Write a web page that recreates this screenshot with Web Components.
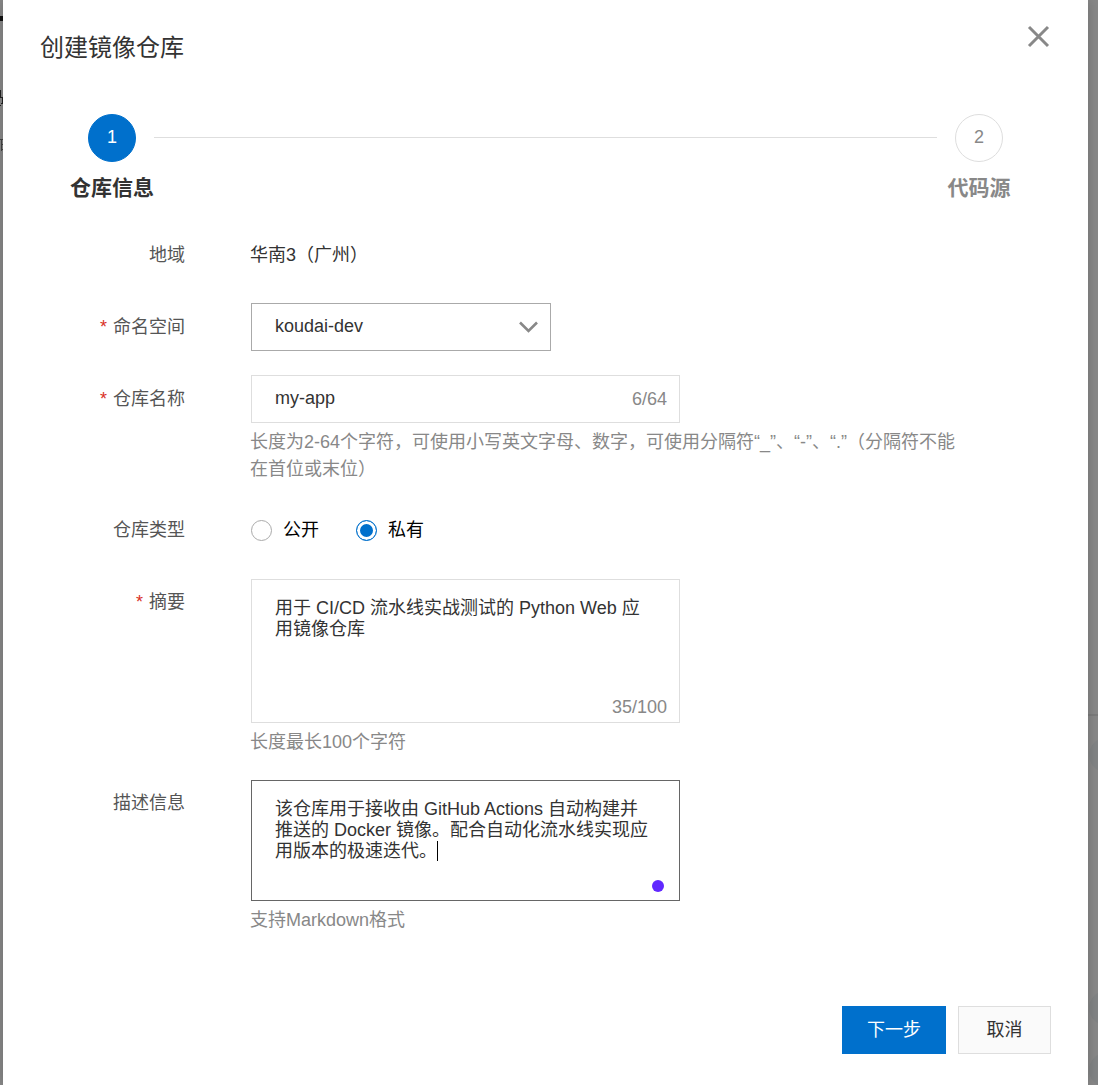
<!DOCTYPE html>
<html lang="zh-CN">
<head>
<meta charset="utf-8">
<meta name="viewport" content="width=device-width, initial-scale=1">
<title>创建镜像仓库</title>
<style>
  body{margin:0;background:#888;color:#333;font:18px/27px "Liberation Sans","Noto Sans CJK SC",sans-serif;text-spacing-trim:space-all}
</style>
</head>
<body>
<repo-dialog heading="创建镜像仓库">
  <step-bar slot="steps">
    <step-item num="1" active>仓库信息</step-item>
    <step-item num="2">代码源</step-item>
  </step-bar>
  <static-field label="地域">华南3（广州）</static-field>
  <select-field label="命名空间" required value="koudai-dev"></select-field>
  <text-field label="仓库名称" required value="my-app" count="6/64">长度为2-64个字符，可使用小写英文字母、数字，可使用分隔符“_”、“-”、“.”（分隔符不能在首位或末位）</text-field>
  <radio-field label="仓库类型" options="公开,私有" value="私有"></radio-field>
  <area-field label="摘要" required count="35/100" value="用于 CI/CD 流水线实战测试的 Python Web 应用镜像仓库">长度最长100个字符</area-field>
  <area-field label="描述信息" active value="该仓库用于接收由 GitHub Actions 自动构建并推送的 Docker 镜像。配合自动化流水线实现应用版本的极速迭代。">支持Markdown格式</area-field>
  <ui-button slot="actions" primary>下一步</ui-button>
  <ui-button slot="actions">取消</ui-button>
</repo-dialog>

<script>
(function () {
  class RepoDialog extends HTMLElement {
    connectedCallback() {
      const s = this.attachShadow({ mode: 'open' });
      s.innerHTML = `
        <style>
          *{box-sizing:border-box}
          :host{display:block;position:relative;padding:0 10px 0 3px;overflow:hidden}
          .under{position:absolute;inset:0;width:100%;height:100%}
          .panel{position:relative;display:flex;flex-direction:column;min-height:100vh;padding:24px 37px 31px;background:#fff;box-shadow:0 0 12px rgba(0,0,0,.2)}
          header{display:flex;justify-content:space-between;align-items:flex-start}
          h1{margin:0;font-size:24px;font-weight:400;line-height:48px}
          .close{display:block;width:24px;height:24px;padding:0;border:0;background:none;cursor:pointer}
          .close svg{display:block}
          .steps{margin:42px 30px 29px}
          form{display:grid;gap:24px}
          footer{display:flex;justify-content:flex-end;gap:12px;margin-top:auto;padding-top:48px}
        </style>
        <svg class="under" aria-hidden="true">
          <path d="M0 16h3v5H0z" fill="#111"/>
          <path d="M0 90h1v7H0zM0 97h3v1H0zM2 98h1v5H2zM1 103h2v1H1zM0 105h1v1H0z" fill="#222"/>
          <path d="M0 139h3v1H0zM1 140h1v11H1zM2 144h1v1H2zM2 149h1v1H2z" fill="#444"/>
          <svg x="100%" overflow="visible"><path d="M-10 714h10v2h-10z" fill="#7c7c7c"/><g fill="#828485"><circle cx="8" cy="755" r="17"/><circle cx="8" cy="1008" r="17"/><circle cx="8" cy="1070" r="17"/></g></svg>
        </svg>
        <section class="panel" role="dialog" aria-labelledby="title">
          <header>
            <h1 id="title">${this.getAttribute('heading')}</h1>
            <button class="close" type="button" aria-label="关闭"><svg width="24" height="24" viewBox="0 0 24 24" fill="none"><path d="M2 3L21 22M21 3L2 22" stroke="#888" stroke-width="3"/></svg></button>
          </header>
          <div class="steps"><slot name="steps"></slot></div>
          <form><slot></slot></form>
          <footer><slot name="actions"></slot></footer>
        </section>`;
    }
  }

  class StepBar extends HTMLElement {
    connectedCallback() {
      const s = this.attachShadow({ mode: 'open' });
      s.innerHTML = `
        <style>
          :host{display:flex;align-items:flex-start}
          .line{order:1;flex:1;height:1px;margin-top:23px;background:#dedede}
          ::slotted(:last-child){order:2}
        </style>
        <slot></slot><div class="line"></div>`;
    }
  }

  class StepItem extends HTMLElement {
    connectedCallback() {
      const s = this.attachShadow({ mode: 'open' });
      s.innerHTML = `
        <style>
          :host{display:flex;flex-direction:column;align-items:center;gap:12px;min-width:84px;color:#888}
          .dot{box-sizing:border-box;width:48px;height:48px;border:1px solid #dedede;border-radius:50%;line-height:44px;text-align:center}
          .name{font-size:21px;line-height:28px;font-weight:700}
          :host([active]){color:#333}
          :host([active]) .dot{border-color:#0070cc;background:#0070cc;color:#fff}
        </style>
        <div class="dot">${this.getAttribute('num')}</div>
        <div class="name"><slot></slot></div>`;
    }
  }

  // shared row: label on the left, control and hint on the right
  class FieldRow extends HTMLElement {
    connectedCallback() {
      const s = this.attachShadow({ mode: 'open' });
      const req = this.hasAttribute('required') ? '<i>*</i>' : '';
      s.innerHTML = `
        <style>
          *{box-sizing:border-box}
          :host{display:grid;grid-template-columns:145px 1fr;column-gap:65px;padding-right:80px}
          .label{line-height:48px;text-align:right;color:#555}
          .label i{margin-right:6px;font-style:normal;color:#d93026}
          .hint{margin:6px 0 -1px;color:#888}
          .box{position:relative;display:flex;max-width:429px;margin-left:1px;border:1px solid #dedede;background:#fff}
          input,select,textarea{font:inherit;color:inherit;margin:0;border:0;border-radius:0;background:none;outline:0}
          .count{color:#888}
          ${this.css()}
        </style>
        <label class="label" id="label" for="control">${req}${this.getAttribute('label')}</label>
        <div class="main">${this.control()}</div>`;
    }
    css() { return ''; }
    hint() { return '<div class="hint"><slot></slot></div>'; }
  }

  class StaticField extends FieldRow {
    css() { return 'output{display:block;line-height:48px}'; }
    control() { return '<output id="control"><slot></slot></output>'; }
  }

  class SelectField extends FieldRow {
    css() {
      return `
        .box{max-width:300px;border-color:#aaa}
        select{appearance:none;width:100%;height:46px;padding:0 48px 2px 23px}
        svg{position:absolute;right:12px;top:16px;pointer-events:none}`;
    }
    control() {
      return `<div class="box">
        <select id="control"><option>${this.getAttribute('value')}</option></select>
        <svg width="20" height="14" viewBox="0 0 20 14" fill="none"><path d="M2 2.5L10.5 11L19 2.5" stroke="#888" stroke-width="2.6"/></svg>
      </div>`;
    }
  }

  class TextField extends FieldRow {
    css() {
      return `
        .box{align-items:center;padding-right:12px}
        input{flex:1;min-width:0;height:46px;padding:0 12px 2px 23px}`;
    }
    control() {
      return `<div class="box">
        <input id="control" type="text" value="${this.getAttribute('value')}">
        <span class="count">${this.getAttribute('count')}</span>
      </div>${this.hint()}`;
    }
  }

  class RadioField extends FieldRow {
    css() {
      return `
        .group{display:flex;gap:37px;height:48px;margin-left:1px;align-items:center;color:#000}
        .group label{display:flex;align-items:center;gap:11px}
        input{appearance:none;width:21px;height:21px;border:1px solid #aaa;border-radius:50%}
        input:checked{border-color:#0070cc;background:#0070cc;box-shadow:inset 0 0 0 3px #fff}`;
    }
    control() {
      const items = this.getAttribute('options').split(',').map(o =>
        `<label><input type="radio" name="type"${o === this.getAttribute('value') ? ' checked' : ''}>${o}</label>`);
      return `<div class="group" role="radiogroup" aria-labelledby="label">${items.join('')}</div>`;
    }
  }

  class AreaField extends FieldRow {
    css() {
      return `
        .box{flex-direction:column;height:144px;margin-top:1px}
        textarea{flex:1;min-height:0;padding:18px 24px 0 23px;line-height:21px;resize:none;overflow:hidden}
        .count{padding:0 12px 1px;text-align:right}
        :host([active]) .box{height:121px;border-color:#666}
        .caret{position:absolute;left:185px;top:60px;width:1px;height:20px;background:#000}
        .badge{position:absolute;right:15px;bottom:8px;width:12px;height:12px;border-radius:50%;background:#6128ff}`;
    }
    control() {
      const active = this.hasAttribute('active');
      return `<div class="box">
        <textarea id="control" spellcheck="false">${this.getAttribute('value')}</textarea>
        ${active ? '<span class="caret"></span><span class="badge"></span>' : `<span class="count">${this.getAttribute('count')}</span>`}
      </div>${this.hint()}`;
    }
  }

  class UiButton extends HTMLElement {
    connectedCallback() {
      const s = this.attachShadow({ mode: 'open' });
      s.innerHTML = `
        <style>
          :host{display:block}
          button{display:block;min-width:93px;height:48px;padding:0 24px;border:1px solid #dedede;border-radius:0;background:#fafafa;color:#333;font:inherit;cursor:pointer}
          :host([primary]) button{border-color:#0070cc;background:#0070cc;color:#fff}
        </style>
        <button type="button"><slot></slot></button>`;
    }
  }

  customElements.define('repo-dialog', RepoDialog);
  customElements.define('step-bar', StepBar);
  customElements.define('step-item', StepItem);
  customElements.define('static-field', StaticField);
  customElements.define('select-field', SelectField);
  customElements.define('text-field', TextField);
  customElements.define('radio-field', RadioField);
  customElements.define('area-field', AreaField);
  customElements.define('ui-button', UiButton);
})();
</script>
</body>
</html>
